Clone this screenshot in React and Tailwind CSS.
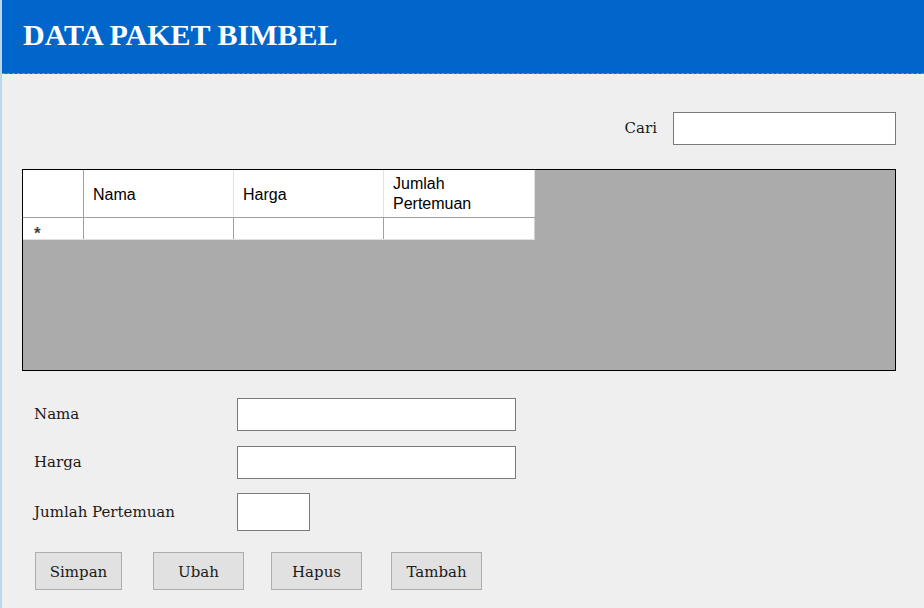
import React, { useState } from "react";

const serif = { fontFamily: '"DejaVu Serif", serif' };

function Field({ label, width, height, value, onChange }) {
  return (
    <div className="flex items-center">
      <label className="w-[203px] text-[15px] text-[#1a1a1a]" style={serif}>
        {label}
      </label>
      <input
        value={value}
        onChange={onChange}
        className={`${width} ${height} bg-white border border-[#7a7a7a] outline-none px-1`}
      />
    </div>
  );
}

export default function App() {
  const [cari, setCari] = useState("");
  const [nama, setNama] = useState("");
  const [harga, setHarga] = useState("");
  const [jumlah, setJumlah] = useState("");

  return (
    <div className="w-[924px] h-[608px] overflow-hidden bg-[#efefef] border-l-2 border-[#bcd6ee] flex flex-col">
      {/* HEADER */}
      <div className="h-[74px] shrink-0 bg-[#0066cc] border-b border-dashed border-[#3f95f0] flex items-center pl-[21px]">
        <h1
          className="text-white font-bold text-[30px] leading-none pb-[3px]"
          style={{ fontFamily: '"Liberation Serif", serif' }}
        >
          DATA PAKET BIMBEL
        </h1>
      </div>

      {/* CARI */}
      <div className="flex items-center justify-end pr-[28px] mt-[38px]">
        <span className="text-[15px] text-[#1a1a1a] mr-[16px]" style={serif}>
          Cari
        </span>
        <input
          value={cari}
          onChange={(e) => setCari(e.target.value)}
          className="w-[223px] h-[33px] bg-white border border-[#7a7a7a] outline-none px-1"
        />
      </div>

      {/* GRID */}
      <div className="ml-[20px] mt-[24px] w-[874px] h-[202px] border border-black bg-[#ababab]">
        <div
          className="w-[512px] text-[16px] text-black"
          style={{ fontFamily: '"Liberation Sans", Arial, sans-serif' }}
        >
          <div className="flex h-[48px] bg-white border-b border-[#a0a0a0]">
            <div className="w-[61px] border-r border-[#a0a0a0]"></div>
            <div className="w-[150px] border-r border-[#e2e2e2] flex items-center pl-[9px] pt-[2px]">Nama</div>
            <div className="w-[150px] border-r border-[#e2e2e2] flex items-center pl-[9px] pt-[2px]">Harga</div>
            <div className="w-[151px] border-r border-[#e2e2e2] flex flex-col justify-center pl-[9px] leading-[20px]">
              <span>Jumlah</span>
              <span>Pertemuan</span>
            </div>
          </div>
          <div className="flex h-[22px] bg-white border-b border-[#e0e0e0]">
            <div className="w-[61px] border-r border-[#a0a0a0] pl-[11px] pt-[7px] text-[17px] leading-none font-bold text-[#444]">
              *
            </div>
            <div className="w-[150px] border-r border-[#a0a0a0]"></div>
            <div className="w-[150px] border-r border-[#a0a0a0]"></div>
            <div className="w-[151px] border-r border-[#d0d0d0]"></div>
          </div>
        </div>
      </div>

      {/* FORM */}
      <div className="pl-[32px] mt-[27px] flex flex-col">
        <Field label="Nama" width="w-[279px]" height="h-[33px]" value={nama} onChange={(e) => setNama(e.target.value)} />
        <div className="mt-[15px]">
          <Field label="Harga" width="w-[279px]" height="h-[33px]" value={harga} onChange={(e) => setHarga(e.target.value)} />
        </div>
        <div className="mt-[14px]">
          <Field label="Jumlah Pertemuan" width="w-[73px]" height="h-[38px]" value={jumlah} onChange={(e) => setJumlah(e.target.value)} />
        </div>
      </div>

      {/* BUTTONS */}
      <div className="flex pl-[33px] mt-[21px] text-[15px] text-[#1a1a1a]" style={serif}>
        <button className="w-[87px] h-[38px] pt-[3px] bg-[#e1e1e1] border border-[#adadad]">Simpan</button>
        <button className="w-[91px] h-[38px] pt-[3px] bg-[#e1e1e1] border border-[#adadad] ml-[31px]">Ubah</button>
        <button className="w-[91px] h-[38px] pt-[3px] bg-[#e1e1e1] border border-[#adadad] ml-[27px]">Hapus</button>
        <button className="w-[91px] h-[38px] pt-[3px] bg-[#e1e1e1] border border-[#adadad] ml-[29px]">Tambah</button>
      </div>
    </div>
  );
}
